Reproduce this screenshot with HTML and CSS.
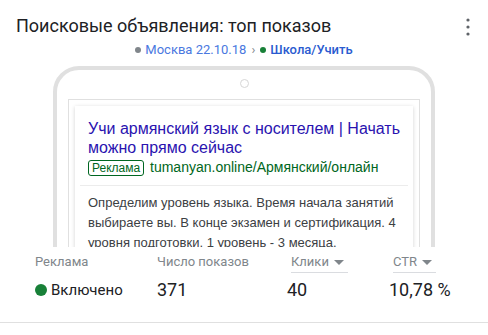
FILE: index.html
```html
<!DOCTYPE html>
<html lang="ru">
<head>
    <meta charset="utf-8">
    <title>Поисковые объявления</title>
    <link rel="stylesheet" href="styles.css">
</head>
<body>
    <div class="header">
        <h1 class="title">Поисковые объявления: топ показов</h1>
        <svg class="menu" width="4" height="18" viewBox="0 0 4 18">
            <circle cx="2" cy="2" r="1.6" fill="#5f6368"/>
            <circle cx="2" cy="9" r="1.6" fill="#5f6368"/>
            <circle cx="2" cy="16" r="1.6" fill="#5f6368"/>
        </svg>
    </div>

    <div class="crumbs">
        <span class="dot dot-grey"></span>
        <a class="crumb">Москва 22.10.18</a>
        <span class="sep">›</span>
        <span class="dot dot-green"></span>
        <a class="crumb crumb-strong">Школа/Учить</a>
    </div>

    <div class="preview">
        <div class="phone">
            <div class="camera"></div>
            <div class="screen">
                <div class="card">
                    <div class="ad-head">
                        <div class="ad-title">Учи армянский язык с носителем | Начать можно прямо сейчас</div>
                        <div class="ad-url"><span class="badge">Реклама</span> tumanyan.online/Армянский/онлайн</div>
                    </div>
                    <div class="ad-desc">
                        Определим уровень языка. Время начала занятий выбираете вы. В конце экзамен и сертификация. 4 уровня подготовки. 1 уровень - 3 месяца.
                    </div>
                </div>
            </div>
        </div>
    </div>

    <div class="stats">
        <div class="label">Реклама</div>
        <div class="label">Число показов</div>
        <div class="label sortable"><span>Клики <i class="caret"></i></span></div>
        <div class="label sortable"><span>CTR <i class="caret"></i></span></div>

        <div class="value status"><span class="dot-on"></span>Включено</div>
        <div class="value">371</div>
        <div class="value shift">40</div>
        <div class="value shift">10,78 %</div>
    </div>
</body>
</html>
```

FILE: styles.css
```css
body {
    margin: 0;
    background: #fff;
    font-family: Roboto, "Noto Sans", sans-serif;
    color: #202124;
}

.header {
    display: flex;
    align-items: center;
    justify-content: space-between;
    padding: 14px 18px 0 16px;
}

.title {
    margin: 0;
    font-size: 18px;
    font-weight: 400;
    line-height: 24px;
    color: #202124;
}

.menu {
    display: block;
    margin-top: 2px;
}

.crumbs {
    display: flex;
    justify-content: center;
    align-items: center;
    gap: 4px;
    margin: 4px 0 8px;
    font-size: 13px;
    line-height: 16px;
}

.dot {
    width: 6px;
    height: 6px;
    border-radius: 50%;
}

.dot-grey {
    background: #80868b;
}

.dot-green {
    background: #188038;
}

.crumb {
    color: #4a78e0;
}

.crumb-strong {
    color: #2a5bd0;
    font-weight: 500;
}

.sep {
    color: #80868b;
    margin: 0 1px;
}

.preview {
    height: 181px;
    overflow: hidden;
}

.phone {
    width: 374px;
    height: 240px;
    margin: 0 auto;
    border: 4px solid #e0e0e0;
    border-radius: 26px 26px 0 0;
}

.camera {
    width: 7px;
    height: 7px;
    margin: 9px auto 11px;
    border: 1px solid #d6d6d6;
    border-radius: 50%;
}

.screen {
    margin: 0 11px;
    padding: 6px;
    border: 1px solid #e0e0e0;
    height: 200px;
}

.card {
    padding: 0 5px;
    background: #fff;
    box-shadow: 0 1px 4px rgba(0, 0, 0, 0.18);
    font-family: "Liberation Sans", Arial, sans-serif;
    height: 200px;
}

.ad-head {
    padding: 13px 0 9px 8px;
    border-bottom: 1px solid #ececec;
}

.ad-title {
    font-size: 16px;
    line-height: 19px;
    color: #2a13b0;
}

.ad-url {
    margin-top: 2px;
    font-size: 14px;
    line-height: 17px;
    color: #006621;
}

.badge {
    display: inline-block;
    padding: 0 3px;
    border: 1px solid #006621;
    border-radius: 3px;
    font-size: 12px;
    line-height: 14px;
    margin-right: 2px;
}

.ad-desc {
    padding: 7px 8px 0;
    font-size: 13px;
    line-height: 20px;
    color: #3c4043;
}

.stats {
    display: grid;
    grid-template-columns: 122px 134px 102px 1fr;
    padding: 5px 0 20px 35px;
    border-bottom: 1px solid #e0e0e0;
    background: #fff;
}

.label {
    font-size: 13px;
    line-height: 20px;
    color: #80868b;
}

.sortable span {
    display: inline-flex;
    align-items: center;
    gap: 5px;
    padding-right: 4px;
    border-bottom: 1px solid #dadce0;
}

.caret {
    width: 0;
    height: 0;
    border-left: 5px solid transparent;
    border-right: 5px solid transparent;
    border-top: 5px solid #80868b;
}

.value {
    margin-top: 5px;
    font-size: 18px;
    line-height: 24px;
    color: #202124;
}

.shift {
    margin-left: -4px;
}

.status {
    display: flex;
    align-items: center;
    gap: 4px;
    font-size: 15px;
}

.dot-on {
    width: 12px;
    height: 12px;
    border-radius: 50%;
    background: #188038;
}
```
